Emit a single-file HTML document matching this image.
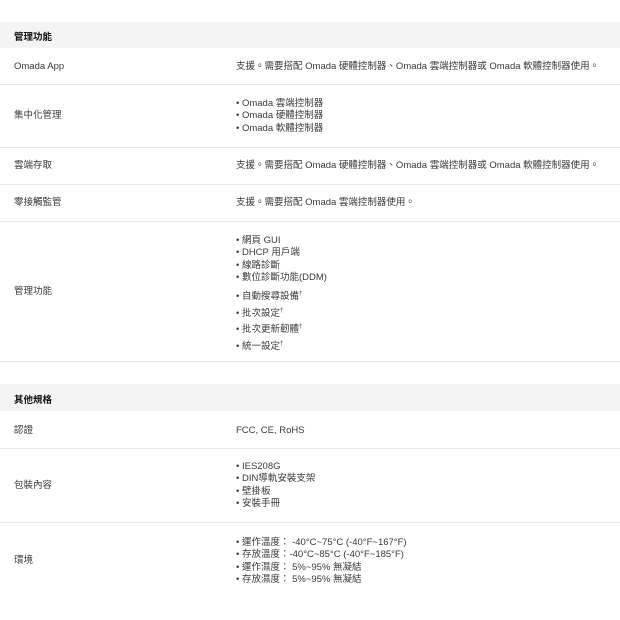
<!DOCTYPE html>
<html><head><meta charset="utf-8"><style>
body{margin:0;width:620px;height:620px;background:#fff;position:relative;overflow:hidden;font-family:"Liberation Sans","Noto Sans CJK TC",sans-serif;font-size:9.5px;color:#3a3a3a}
.h{position:absolute;left:0;width:620px;background:#f4f4f5;font-weight:bold;color:#111}
.h span{position:absolute;left:14px}
.l,.v{margin-top:1px}
.l{position:absolute;left:14px;white-space:nowrap;line-height:12px}
.v{position:absolute;left:236px;white-space:nowrap;line-height:12.4px}
.d{position:absolute;left:0;width:620px;height:1px;background:#e9e9e9}
sup{font-size:6px;vertical-align:4px;line-height:0}
</style></head><body>
<div class="h" style="top:22px;height:26px"><span style="top:7px">管理功能</span></div>
<div class="l" style="top:60px">Omada App</div>
<div class="v" style="top:60px">支援。需要搭配 Omada 硬體控制器、Omada 雲端控制器或 Omada 軟體控制器使用。</div>
<div class="d" style="top:84px"></div>
<div class="l" style="top:109px">集中化管理</div>
<div class="v" style="top:97px">• Omada 雲端控制器<br>• Omada 硬體控制器<br>• Omada 軟體控制器</div>
<div class="d" style="top:147px"></div>
<div class="l" style="top:159px">雲端存取</div>
<div class="v" style="top:159px">支援。需要搭配 Omada 硬體控制器、Omada 雲端控制器或 Omada 軟體控制器使用。</div>
<div class="d" style="top:184px"></div>
<div class="l" style="top:196px">零接觸監管</div>
<div class="v" style="top:196px">支援。需要搭配 Omada 雲端控制器使用。</div>
<div class="d" style="top:221px"></div>
<div class="l" style="top:285px">管理功能</div>
<div class="v" style="top:234px">• 網頁 GUI<br>• DHCP 用戶端<br>• 線路診斷<br>• 數位診斷功能(DDM)</div>
<div class="v" style="top:288px;line-height:16.5px">• 自動搜尋設備<sup>†</sup><br>• 批次設定<sup>†</sup><br>• 批次更新韌體<sup>†</sup><br>• 統一設定<sup>†</sup></div>
<div class="d" style="top:361px"></div>
<div class="h" style="top:384px;height:27px"><span style="top:8px">其他規格</span></div>
<div class="l" style="top:424px">認證</div>
<div class="v" style="top:424px">FCC, CE, RoHS</div>
<div class="d" style="top:448px"></div>
<div class="l" style="top:479px">包裝內容</div>
<div class="v" style="top:460px">• IES208G<br>• DIN導軌安裝支架<br>• 壁掛板<br>• 安裝手冊</div>
<div class="d" style="top:522px"></div>
<div class="l" style="top:554px">環境</div>
<div class="v" style="top:536px">• 運作溫度： -40°C~75°C (-40°F~167°F)<br>• 存放溫度：-40°C~85°C (-40°F~185°F)<br>• 運作濕度： 5%~95% 無凝結<br>• 存放濕度： 5%~95% 無凝結</div>
</body></html>
